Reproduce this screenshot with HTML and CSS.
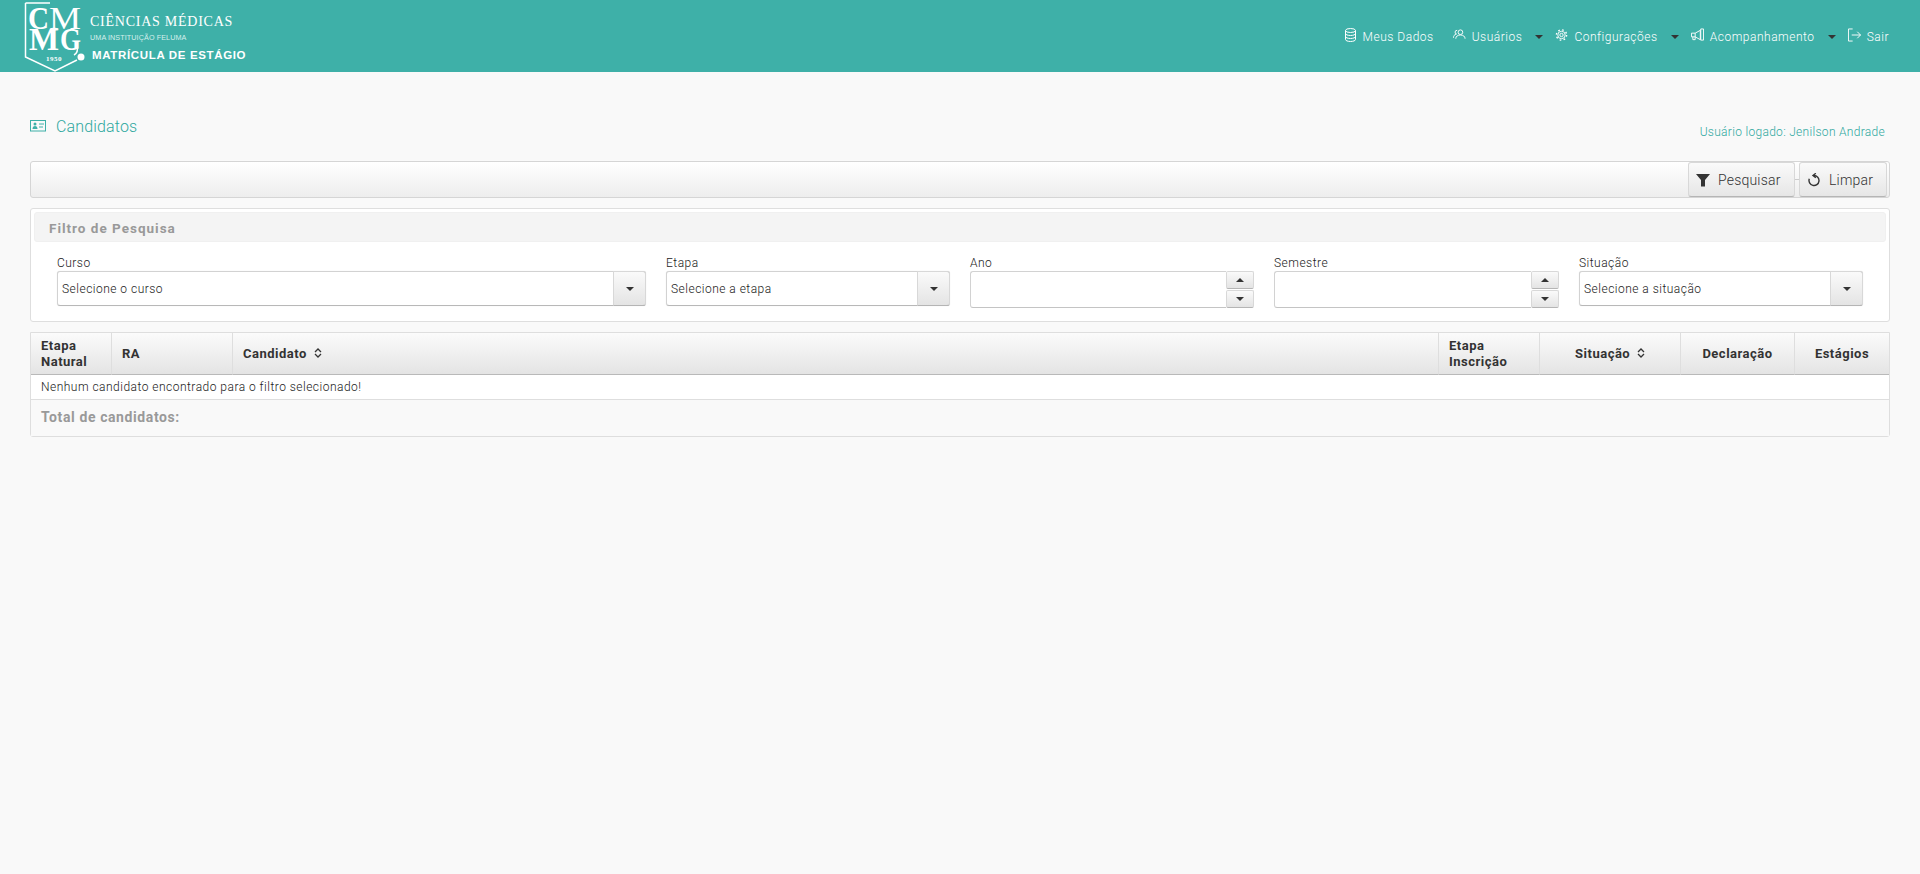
FILE: index.html
```html
<!DOCTYPE html>
<html lang="pt-BR">
<head>
<meta charset="utf-8">
<title>Candidatos</title>
<link rel="stylesheet" href="styles.css">
</head>
<body>
<header class="topbar">
  <svg class="logo" width="260" height="72" viewBox="0 0 260 72">
    <path class="logo-line" d="M25.500 3H50M25.500 3V57L55 71L77 60M74 55C78 53 78 50 77 46"/>
    <text class="logo-big" x="28" y="29" textLength="21" lengthAdjust="spacingAndGlyphs">C</text>
    <text class="logo-big logo-thin" x="49" y="29" textLength="32" lengthAdjust="spacingAndGlyphs">M</text>
    <text class="logo-big" x="29" y="50" textLength="30" lengthAdjust="spacingAndGlyphs">M</text>
    <text class="logo-big" x="60" y="50" textLength="21" lengthAdjust="spacingAndGlyphs">G</text>
    <circle class="logo-dot" cx="81" cy="57" r="3.500"/>
    <text class="logo-year" x="46" y="61">1950</text>
    <text class="logo-name" x="90" y="26">CIÊNCIAS MÉDICAS</text>
    <text class="logo-sub" x="90" y="40">UMA INSTITUIÇÃO FELUMA</text>
    <text class="logo-app" x="92" y="59">MATRÍCULA DE ESTÁGIO</text>
  </svg>
  <nav class="nav">
    <a class="nav-item">
      <svg class="nav-icon" viewBox="0 0 12 14"><ellipse cx="6" cy="2.500" rx="5" ry="2"/><path d="M1 2.500v9c0 1.100 2.200 2 5 2s5-.9 5-2v-9M1 5.500c0 1.100 2.200 2 5 2s5-.9 5-2M1 8.500c0 1.100 2.200 2 5 2s5-.9 5-2"/></svg>
      <span>Meus Dados</span>
    </a>
    <a class="nav-item">
      <svg class="nav-icon" viewBox="0 0 14 14"><circle cx="8" cy="4" r="2.500"/><path d="M3 11c0-2.500 2-4 5-4s5 1.500 5 4M.5 10c0-2 1-3.500 3-4M4.500 2a2 2 0 0 0-.5 4"/></svg>
      <span>Usuários</span>
      <i class="caret"></i>
    </a>
    <a class="nav-item">
      <svg class="nav-icon" viewBox="0 0 14 14"><circle cx="7" cy="7" r="4"/><circle cx="7" cy="7" r="1.800"/><circle class="gear-teeth" cx="7" cy="7" r="5.500"/></svg>
      <span>Configurações</span>
      <i class="caret"></i>
    </a>
    <a class="nav-item">
      <svg class="nav-icon" viewBox="0 0 14 14"><path d="M.5 5h4v4h-4zM4.500 5L10 2v10L4.500 9M10.500 .5h3v12h-3zM2 9v3h2.500V9"/></svg>
      <span>Acompanhamento</span>
      <i class="caret"></i>
    </a>
    <a class="nav-item nav-last">
      <svg class="nav-icon" viewBox="0 0 14 14"><path d="M5 .5H.5v13H5M4 7h9.500M10 3.500L13.500 7 10 10.500"/></svg>
      <span>Sair</span>
    </a>
  </nav>
</header>

<main class="content">
  <div class="title-row">
    <h1 class="page-title">
      <svg class="title-icon" viewBox="0 0 16 12"><rect x=".5" y=".5" width="15" height="10.500"/><circle class="filled" cx="5" cy="4" r="1.500"/><path class="filled" d="M2.500 9c0-2 1-3 2.500-3s2.500 1 2.500 3z"/><path d="M9 4h5M9 7h4"/></svg>
      Candidatos
    </h1>
    <div class="logged">Usuário logado: Jenilson Andrade</div>
  </div>

  <div class="toolbar">
    <button class="btn btn-search">
      <svg class="btn-icon" viewBox="0 0 14 14"><path class="solid" d="M0 1h14L9 7v6.500H5V7z"/></svg>
      Pesquisar
    </button>
    <span class="btn-sep"></span>
    <button class="btn btn-clear">
      <svg class="btn-icon" viewBox="0 0 14 14"><path class="ring" d="M7 2.500A5 5 0 1 1 2.300 5.800M8.800 .3L6 2.500l2.800 2.200"/></svg>
      Limpar
    </button>
  </div>

  <section class="panel">
    <div class="panel-head">Filtro de Pesquisa</div>
    <div class="filters">
      <div class="field">
        <label>Curso</label>
        <div class="select"><span class="select-text">Selecione o curso</span><span class="select-btn"><i class="arrow-down"></i></span></div>
      </div>
      <div class="field">
        <label>Etapa</label>
        <div class="select"><span class="select-text">Selecione a etapa</span><span class="select-btn"><i class="arrow-down"></i></span></div>
      </div>
      <div class="field">
        <label>Ano</label>
        <div class="spinner"><span class="spin-input"></span><span class="spin-btns"><span class="spin-btn"><i class="arrow-up"></i></span><span class="spin-btn"><i class="arrow-down"></i></span></span></div>
      </div>
      <div class="field">
        <label>Semestre</label>
        <div class="spinner"><span class="spin-input"></span><span class="spin-btns"><span class="spin-btn"><i class="arrow-up"></i></span><span class="spin-btn"><i class="arrow-down"></i></span></span></div>
      </div>
      <div class="field">
        <label>Situação</label>
        <div class="select"><span class="select-text">Selecione a situação</span><span class="select-btn"><i class="arrow-down"></i></span></div>
      </div>
    </div>
  </section>

  <table class="grid">
    <colgroup>
      <col class="c1"><col class="c2"><col><col class="c4"><col class="c5"><col class="c6"><col class="c7">
    </colgroup>
    <thead>
      <tr>
        <th>Etapa<br>Natural</th>
        <th>RA</th>
        <th>Candidato <svg class="sort" viewBox="0 0 8 10"><path d="M1 4l3-3 3 3M1 6l3 3 3-3"/></svg></th>
        <th>Etapa<br>Inscrição</th>
        <th class="center">Situação <svg class="sort" viewBox="0 0 8 10"><path d="M1 4l3-3 3 3M1 6l3 3 3-3"/></svg></th>
        <th class="center">Declaração</th>
        <th class="center">Estágios</th>
      </tr>
    </thead>
    <tbody>
      <tr><td colspan="7" class="empty">Nenhum candidato encontrado para o filtro selecionado!</td></tr>
    </tbody>
    <tfoot>
      <tr><td colspan="7" class="total">Total de candidatos:</td></tr>
    </tfoot>
  </table>
</main>
</body>
</html>
```

FILE: styles.css
```css
* { box-sizing: border-box; }
html, body { margin: 0; height: 100%; }
body {
  background: #f9f9f9;
  color: #1a1a1a;
  font-family: Roboto, "Liberation Sans", sans-serif;
  font-size: 12px;
  font-weight: 300;
  letter-spacing: .48px;
}

.topbar {
  height: 72px;
  background: #3eb0a8;
  display: flex;
  justify-content: space-between;
  align-items: center;
}
.logo { display: block; flex: none; }
.logo-line { fill: none; stroke: #fff; stroke-width: 1.500; }
.logo-big { fill: #fff; font-family: "Liberation Serif", serif; font-weight: 700; font-size: 32px; letter-spacing: 0; }
.logo-thin { font-weight: 400; }
.logo-dot { fill: #fff; }
.logo-year { fill: #fff; font-family: "Liberation Serif", serif; font-size: 7px; font-weight: 700; letter-spacing: .5px; }
.logo-name { fill: #fff; font-family: "Liberation Serif", serif; font-size: 14px; letter-spacing: .75px; }
.logo-sub { fill: #d6efec; font-family: "Liberation Sans", sans-serif; font-size: 7.200px; letter-spacing: .1px; }
.logo-app { fill: #fff; font-family: "Liberation Sans", sans-serif; font-size: 11.500px; font-weight: 700; letter-spacing: .65px; }

.nav { display: flex; align-items: center; padding: 1px 31px 0 0; color: #fff; font-weight: 300; letter-spacing: .52px; }
.nav-item { display: flex; align-items: center; margin-left: 19px; line-height: 16px; }
.nav-item:nth-child(3) { margin-left: 12px; }
.nav-item:nth-child(4) { margin-left: 12px; }
.nav-item.nav-last { margin-left: 12px; }
.nav-icon { width: 13px; height: 14px; margin-right: 6px; margin-top: -4px; fill: none; stroke: #fff; stroke-width: 1; }
.gear-teeth { stroke-width: 1.500; stroke-dasharray: 1.800 2.520; }
.caret { width: 0; height: 0; margin-left: 13px; border-style: solid; border-width: 4px 4px 0; border-color: #333 transparent transparent; }

.content { padding: 0 30px; }
.title-row { display: flex; justify-content: space-between; align-items: flex-end; height: 89px; }
.page-title { margin: 0 0 24px; display: flex; align-items: center; color: #2fa89f; font-size: 16px; font-weight: 300; line-height: 20px; letter-spacing: .15px; }
.title-icon { width: 16px; height: 12px; margin-right: 10px; margin-top: -2px; fill: none; stroke: #3eb0a8; stroke-width: 1; }
.title-icon .filled { fill: #3eb0a8; stroke: none; }
.logged { margin: 0 5px 21px 0; color: #2fa89f; font-size: 12px; line-height: 16px; letter-spacing: .3px; }

.toolbar {
  height: 37px;
  display: flex;
  justify-content: flex-end;
  align-items: center;
  padding: 0 2px 0 1px;
  border: 1px solid #d5d5d5;
  border-radius: 3px;
  background: linear-gradient(#fff, #ededed);
}
.btn {
  height: 35px;
  display: flex;
  align-items: center;
  padding: 0 10px 0 7px;
  border: 1px solid #d8d8d8;
  border-bottom-color: #b5b5b5;
  border-radius: 3px;
  background: linear-gradient(#fafafa, #e6e6e6);
  color: #333;
  font: inherit;
  font-size: 14px;
  letter-spacing: .2px;
}
.btn-search { width: 107px; }
.btn-clear { width: 88px; }
.btn-sep { width: 4px; height: 1px; background: #ccc; }
.btn-icon { width: 14px; height: 14px; margin-right: 8px; flex: none; }
.solid { fill: #333; }
.ring { fill: none; stroke: #333; stroke-width: 1.400; }

.panel {
  height: 114px;
  margin-top: 10px;
  padding: 3px;
  border: 1px solid #dedede;
  border-radius: 3px;
  background: #fff;
}
.panel-head {
  height: 30px;
  padding: 1px 14px 0;
  display: flex;
  align-items: center;
  border: 1px solid #f0f0f0;
  border-radius: 3px;
  background: #f4f4f4;
  color: #999;
  font-size: 13.500px;
  font-weight: 700;
  letter-spacing: 1px;
}
.filters {
  display: grid;
  grid-template-columns: 589px 284px 284px 285px 284px;
  column-gap: 20px;
  padding: 13px 22px 0 23px;
}
.field label { display: block; line-height: 16px; }
.select, .spinner { display: flex; border-radius: 3px; }
.select {
  height: 35px;
  border: 1px solid #d2d2d2;
  border-bottom-color: #b8b8b8;
  background: #fff;
  box-shadow: 0 0 1px #ddd;
}
.select-text { flex: 1; padding-left: 4px; line-height: 35px; }
.select-btn {
  width: 33px;
  margin: -1px -1px -1px 0;
  display: flex;
  align-items: center;
  justify-content: center;
  border: 1px solid #d8d8d8;
  border-bottom-color: #b5b5b5;
  border-radius: 0 3px 3px 0;
  background: linear-gradient(#fafafa, #e4e4e4);
}
.arrow-down, .arrow-up { width: 0; height: 0; border-style: solid; }
.arrow-down { border-width: 4px 4px 0; border-color: #333 transparent transparent; }
.arrow-up { border-width: 0 4px 4px; border-color: transparent transparent #333; }
.spinner { height: 37px; }
.spin-input { flex: 1; border: 1px solid #d2d2d2; border-right: 0; border-bottom-color: #c4c4c4; border-radius: 3px 0 0 3px; background: #fff; }
.spin-btns { width: 28px; display: flex; flex-direction: column; justify-content: space-between; }
.spin-btn {
  height: 18px;
  display: flex;
  align-items: center;
  justify-content: center;
  border: 1px solid #d8d8d8;
  border-bottom-color: #b5b5b5;
  border-radius: 2px;
  background: linear-gradient(#fafafa, #e4e4e4);
}

.grid {
  width: 100%;
  margin-top: 10px;
  table-layout: fixed;
  border-collapse: separate;
  border-spacing: 0;
  border: 1px solid #dedede;
  border-radius: 0 0 3px 3px;
}
.c1 { width: 81px; } .c2 { width: 121px; } .c4 { width: 101px; } .c5 { width: 141px; } .c6 { width: 114px; } .c7 { width: 94px; }
.grid th {
  height: 42px;
  padding: 1px 10px 0;
  text-align: left;
  font-size: 13px;
  font-weight: 700;
  line-height: 16px;
  letter-spacing: .5px;
  color: #333;
  border-right: 1px solid #dedede;
  border-bottom: 1px solid #b9b9b9;
  background: linear-gradient(#fbfbfb, #e4e4e4);
}
.grid th:last-child { border-right: 0; }
.grid th.center { text-align: center; }
.sort { width: 8px; height: 10px; margin-left: 3px; fill: none; stroke: #333; stroke-width: 1.300; }
.empty { height: 25px; padding: 0 10px; background: #fff; border-bottom: 1px solid #dedede; }
.total { height: 36px; padding: 0 10px 2px; color: #999; background: #f9f9f9; font-size: 14px; font-weight: 700; letter-spacing: .6px; }
```
